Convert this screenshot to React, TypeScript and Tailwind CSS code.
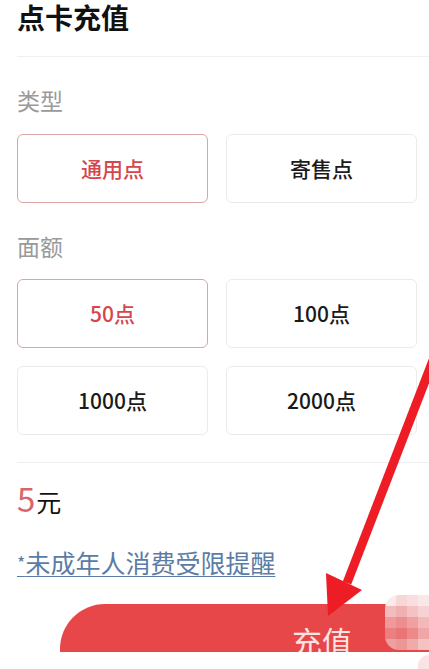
import React from "react";

const font = { fontFamily: '"Noto Sans CJK SC", "Noto Sans", sans-serif' };

function Option({ label, active }: { label: string; active?: boolean }) {
  return (
    <div
      className={`h-[69px] flex items-center justify-center rounded-[6px] border bg-white text-[21px] font-medium ${
        active ? "border-[#dba4a7] text-[#d4474d]" : "border-[#ebebeb] text-[#1a1a1a]"
      }`}
    >
      {label}
    </div>
  );
}

const mosaic = [
  ["#fbeaea", "#f7d6d6", "#f8dede", "#fae8e8"],
  ["#f3bcbc", "#f1b0b0", "#f4c2c2", "#f7d2d2"],
  ["#ee9a9a", "#ec8e8e", "#efa0a0", "#f3b8b8"],
  ["#ea8080", "#e97676", "#ec8a8a", "#f0a6a6"],
  ["#ef9f9f", "#ed9696", "#f1aaaa", "#f5c2c2"],
];

export default function App() {
  return (
    <div className="relative h-[669px] w-full overflow-hidden bg-white pl-[17px] pr-[12px]" style={font}>
      <div className="h-[34px] text-[28px] font-bold leading-[34px] text-[#111]">点卡充值</div>
      <div className="mt-[22px] mr-[-12px] border-t border-[#f0f0f0]" />

      <div className="mt-[27px] h-[32px] text-[23px] leading-[32px] text-[#9a9a9a]">类型</div>
      <div className="mt-[18px] grid grid-cols-2 gap-[18px]">
        <Option label="通用点" active />
        <Option label="寄售点" />
      </div>

      <div className="mt-[27px] h-[32px] text-[23px] leading-[32px] text-[#9a9a9a]">面额</div>
      <div className="mt-[17px] grid grid-cols-2 gap-[18px]">
        <Option label="50点" active />
        <Option label="100点" />
        <Option label="1000点" />
        <Option label="2000点" />
      </div>

      <div className="mt-[27px] mr-[-12px] border-t border-[#f0f0f0]" />

      <div className="mt-[15px] flex h-[40px] items-baseline">
        <span className="text-[33px] leading-[40px] text-[#d9646b]">5</span>
        <span className="ml-[1px] text-[25px] leading-[40px] text-[#111]">元</span>
      </div>

      <div className="mt-[28px] h-[32px] text-[25px] leading-[32px] text-[#5b7ca6] underline decoration-1 underline-offset-[3px]">
        <span className="text-[18px] align-top">*</span>未成年人消费受限提醒
      </div>

      <div className="mt-[26px] ml-[43px] h-[48px] w-[500px] overflow-hidden">
        <div className="h-[90px] w-[500px] rounded-full bg-[#e84749] pl-[232px] pt-[16px]">
          <span className="text-[30px] leading-[40px] text-[#fbe4e4]">充值</span>
        </div>
      </div>

      <div className="absolute left-[385px] top-[595px] grid grid-cols-4 overflow-hidden rounded-l-[14px]">
        {mosaic.map((row, r) =>
          row.map((c, i) => (
            <div key={`${r}-${i}`} className="h-[11px] w-[11px]" style={{ background: c }} />
          ))
        )}
      </div>
      <div className="absolute left-[418px] top-[655px] h-[14px] w-[11px] rounded-tl-full bg-[#fbe3e3]" />

      <svg className="pointer-events-none absolute left-0 top-0" width="429" height="669" viewBox="0 0 429 669">
        <line x1="437" y1="350" x2="347" y2="583" stroke="#ee1c25" strokeWidth="9" />
        <polygon points="328,616 326,573 362,590" fill="#ee1c25" />
      </svg>
    </div>
  );
}
